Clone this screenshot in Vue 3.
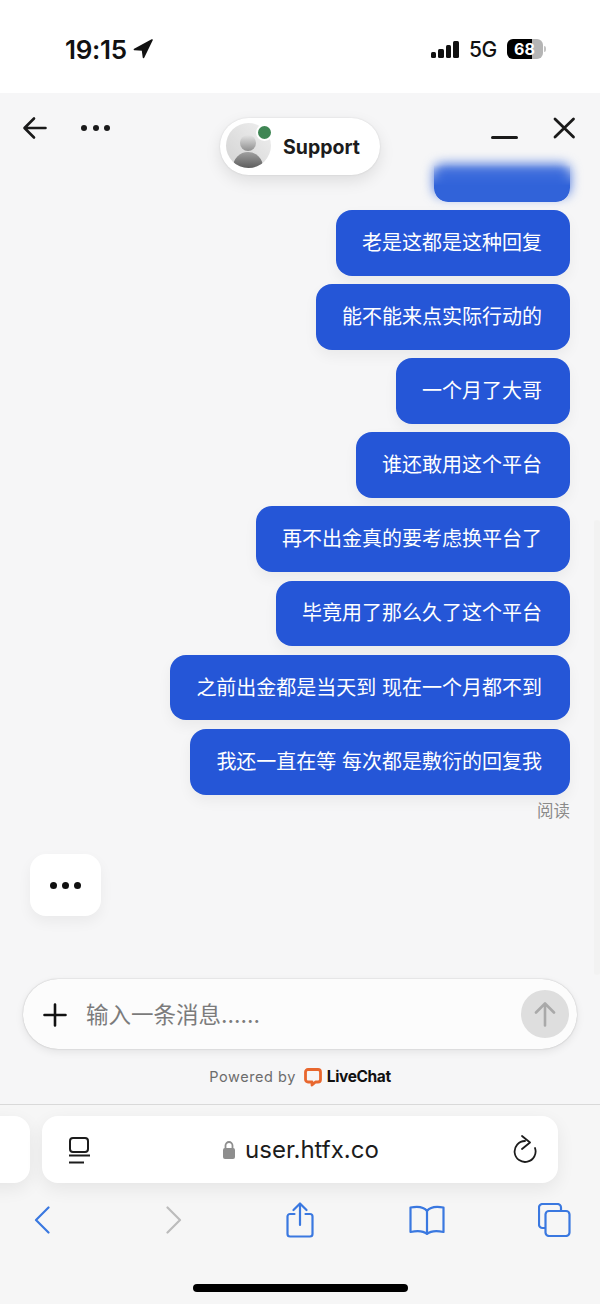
<template>
  <div class="screen">
    <div class="status">
      <div class="clock">
        <span>19:15</span>
        <svg width="20" height="20" viewBox="0 0 20 20"><path d="M19 1 1.500 10.500 9.500 11 10.500 18.500Z" fill="#111" stroke="#111" stroke-width="1.6" stroke-linejoin="round" /></svg>
      </div>
      <div class="status-right">
        <div class="signal"><i></i><i></i><i></i><i></i></div>
        <span class="net">5G</span>
        <div class="battery"><span>68</span></div>
        <div class="battery-tip"></div>
      </div>
    </div>

    <div class="chat">
      <div class="chat-head">
        <div class="head-left">
          <svg width="26" height="24" viewBox="0 0 26 24" fill="none" stroke="#1a1a1a" stroke-width="2.6" stroke-linecap="round" stroke-linejoin="round"><path d="M23.5 12H3M12 2.5 2.5 12l9.5 9.5" /></svg>
          <div class="more"><i></i><i></i><i></i></div>
        </div>
        <div class="head-right">
          <div class="minimize"></div>
          <svg width="24" height="24" viewBox="0 0 24 24" fill="none" stroke="#1a1a1a" stroke-width="2.8" stroke-linecap="round"><path d="M3 3 21.500 21M21.500 3 3 21" /></svg>
        </div>
        <div class="agent">
          <div class="avatar">
            <div class="avatar-head"></div>
            <div class="avatar-body"></div>
          </div>
          <div class="online"></div>
          <span>Support</span>
        </div>
      </div>

      <div class="messages">
        <div class="blurred"></div>
        <div v-for="msg in messages" :key="msg" class="bubble">{{ msg }}</div>
        <div class="read">阅读</div>
        <div class="typing"><i></i><i></i><i></i></div>
      </div>

      <div class="scrollbar"></div>

      <div class="composer">
        <svg class="plus" width="26" height="26" viewBox="0 0 26 26" stroke="#111" stroke-width="2.6" stroke-linecap="round"><path d="M13 2.5V23.5M2.5 13H23.5" /></svg>
        <span class="placeholder">输入一条消息......</span>
        <div class="send">
          <svg width="22" height="25" viewBox="0 0 22 25" fill="none" stroke="#a9a9a9" stroke-width="2.6" stroke-linecap="round" stroke-linejoin="round"><path d="M11 23.5V2M2 10.500 11 1.500 20 10.500" /></svg>
        </div>
      </div>

      <div class="powered">
        <span>Powered by</span>
        <svg width="18" height="19" viewBox="0 0 18 19" fill="none"><path d="M4 1.5H14A2.5 2.5 0 0 1 16.5 4V11.5A2.5 2.5 0 0 1 14 14H11.5L8 17V14H4A2.5 2.5 0 0 1 1.5 11.5V4A2.5 2.5 0 0 1 4 1.5Z" stroke="#e8672e" stroke-width="2.8" stroke-linejoin="round" /></svg>
        <b>LiveChat</b>
      </div>
    </div>

    <div class="browser">
      <div class="tabs">
        <div class="tab-prev"></div>
        <div class="address">
          <svg width="26" height="30" viewBox="0 0 26 30" fill="none" stroke="#1c1c1c" stroke-width="2"><rect x="4" y="3" width="18" height="14" rx="3" /><path d="M3 20.500H24M3 27.500H18" /></svg>
          <div class="url">
            <svg width="14" height="20" viewBox="0 0 14 20"><path d="M3.5 9V5.500a3.500 3.500 0 0 1 7 0V9" fill="none" stroke="#8e8e8e" stroke-width="1.8" /><rect x="1" y="8" width="12" height="11" rx="2" fill="#8e8e8e" /></svg>
            <span>user.htfx.co</span>
          </div>
          <svg width="24" height="30" viewBox="0 0 24 30" fill="none" stroke="#1c1c1c" stroke-width="1.8" stroke-linecap="round" stroke-linejoin="round"><path d="M12 6A10.500 10.500 0 1 0 22 13M9 1 17 7.500 9 14" /></svg>
        </div>
      </div>
      <div class="toolbar">
        <svg class="tool-back" width="16" height="28" viewBox="0 0 16 28" fill="none" stroke="#3a78e0" stroke-width="2.2" stroke-linecap="round" stroke-linejoin="round"><path d="M14.500 1.500 2 14 14.500 26.500" /></svg>
        <svg class="tool-forward" width="16" height="28" viewBox="0 0 16 28" fill="none" stroke="#bcbcbc" stroke-width="2.2" stroke-linecap="round" stroke-linejoin="round"><path d="M1.500 1.500 14 14 1.500 26.500" /></svg>
        <svg class="tool-share" width="28" height="36" viewBox="0 0 28 36" fill="none" stroke="#3a78e0" stroke-width="2.2" stroke-linecap="round" stroke-linejoin="round"><path d="M8.500 12H4A2.500 2.500 0 0 0 1.500 14.500V32A2.500 2.500 0 0 0 4 34.500H24A2.500 2.500 0 0 0 26.500 32V14.500A2.500 2.500 0 0 0 24 12H19.500M14 23V2M7.500 8 14 1.500 20.500 8" /></svg>
        <svg class="tool-book" width="36" height="30" viewBox="0 0 36 30" fill="none" stroke="#3a78e0" stroke-width="2.2" stroke-linecap="round" stroke-linejoin="round"><path d="M18 6C15 2 9 1 1.500 2.500V27C9 25.500 14.500 26 18 29 21.500 26 27 25.500 34.500 27V2.500C27 1 21 2 18 6ZM18 6V29" /></svg>
        <svg class="tool-tabs" width="33" height="34" viewBox="0 0 33 34" fill="none" stroke="#3a78e0" stroke-width="2.2" stroke-linejoin="round"><path d="M7 25H4.500A3.500 3.500 0 0 1 1 21.500V4.500A3.500 3.500 0 0 1 4.500 1H19.500A3.500 3.500 0 0 1 23 4.500V7.500" /><rect x="7.500" y="8" width="24" height="25" rx="3.500" /></svg>
      </div>
      <div class="home-bar"></div>
    </div>
  </div>
</template>

<script setup>
const messages = [
  '老是这都是这种回复',
  '能不能来点实际行动的',
  '一个月了大哥',
  '谁还敢用这个平台',
  '再不出金真的要考虑换平台了',
  '毕竟用了那么久了这个平台',
  '之前出金都是当天到 现在一个月都不到',
  '我还一直在等 每次都是敷衍的回复我'
]
</script>

<style>
html, body {
  margin: 0;
  background: #fff;
}
</style>

<style scoped>
.screen {
  width: 600px;
  height: 1304px;
  overflow: hidden;
  display: flex;
  flex-direction: column;
  font-family: Inter, "Noto Sans CJK SC", sans-serif;
  background: #fff;
}

.status {
  height: 93px;
  flex-shrink: 0;
  box-sizing: border-box;
  padding: 33px 54px 0 65px;
  display: flex;
  justify-content: space-between;
  align-items: flex-start;
}

.clock {
  display: flex;
  align-items: center;
  gap: 6px;
  height: 32px;
  font-size: 26px;
  font-weight: 600;
  letter-spacing: -0.3px;
  color: #111;
}

.status-right {
  display: flex;
  align-items: center;
  height: 32px;
}

.signal {
  display: flex;
  align-items: flex-end;
  gap: 2px;
  height: 17px;
  margin-right: 10px;
}

.signal i {
  width: 5.5px;
  background: #111;
  border-radius: 1.5px;
}

.signal i:nth-child(1) { height: 6px; }
.signal i:nth-child(2) { height: 9px; }
.signal i:nth-child(3) { height: 13px; }
.signal i:nth-child(4) { height: 17px; }

.net {
  font-size: 21px;
  font-weight: 500;
  color: #111;
  margin-right: 10px;
  letter-spacing: -0.3px;
}

.battery {
  width: 36px;
  height: 20px;
  box-sizing: border-box;
  padding-left: 7px;
  border-radius: 6px;
  background: linear-gradient(90deg, #000 0 25px, #b5b5b5 25px);
}

.battery span {
  display: block;
  font-size: 16px;
  line-height: 20px;
  font-weight: 700;
  color: #fff;
}

.battery-tip {
  width: 2px;
  height: 6px;
  margin-left: 1px;
  border-radius: 0 2px 2px 0;
  background: #c4c4c4;
}

.chat {
  position: relative;
  flex: 1;
  min-height: 0;
  display: flex;
  flex-direction: column;
  background: #f6f6f7;
  border-bottom: 1px solid #d9d9d9;
}

.chat-head {
  position: relative;
  height: 72px;
  flex-shrink: 0;
  box-sizing: border-box;
  padding: 23px 24px 0 22px;
  display: flex;
  justify-content: space-between;
  align-items: flex-start;
}

.head-left {
  display: flex;
  align-items: center;
  gap: 33px;
}

.more {
  display: flex;
  gap: 5.5px;
}

.more i {
  width: 6px;
  height: 6px;
  border-radius: 50%;
  background: #1a1a1a;
}

.head-right {
  display: flex;
  align-items: flex-start;
  gap: 34px;
}

.minimize {
  width: 27px;
  height: 3px;
  margin-top: 20px;
  border-radius: 2px;
  background: #1a1a1a;
}

.agent {
  position: absolute;
  left: 220px;
  top: 25px;
  width: 160px;
  height: 57px;
  box-sizing: border-box;
  padding-left: 63px;
  display: flex;
  align-items: center;
  border-radius: 29px;
  background: #fff;
  box-shadow: 0 6px 16px rgba(0, 0, 0, 0.1), 0 0 2px rgba(0, 0, 0, 0.12);
  z-index: 2;
}

.agent span {
  font-size: 19.5px;
  font-weight: 700;
  color: #1c1c1c;
}

.avatar {
  position: absolute;
  left: 6px;
  top: 5px;
  width: 45px;
  height: 45px;
  overflow: hidden;
  border-radius: 50%;
  background: linear-gradient(45deg, #d2d2d2, #f0f0f0);
}

.avatar-head {
  position: absolute;
  left: 14px;
  top: 12px;
  width: 16px;
  height: 16px;
  border-radius: 50%;
  background: linear-gradient(#e4e4e4, #8f8f8f);
}

.avatar-body {
  position: absolute;
  left: 7px;
  top: 29px;
  width: 30px;
  height: 30px;
  border-radius: 50%;
  background: linear-gradient(#a0a0a0, #555 60%);
}

.online {
  position: absolute;
  left: 36px;
  top: 6px;
  width: 13px;
  height: 13px;
  border: 2px solid #fff;
  border-radius: 50%;
  background: #3f8654;
}

.messages {
  flex: 1;
  min-height: 0;
  padding-right: 30px;
  display: flex;
  flex-direction: column;
  align-items: flex-end;
  gap: 8.45px;
}

.bubble {
  height: 65.7px;
  flex-shrink: 0;
  box-sizing: border-box;
  padding: 0 28px 3px 26px;
  display: flex;
  align-items: center;
  border-radius: 16px;
  background: #2556d7;
  box-shadow: 0 6px 14px rgba(0, 0, 0, 0.05);
  font-size: 20px;
  color: #fff;
  white-space: pre;
}

/* first message fades out under the header */
.blurred {
  position: relative;
  width: 136px;
  height: 36.55px;
  flex-shrink: 0;
}

.blurred::before {
  content: "";
  position: absolute;
  inset: -1px 0 6px 0;
  border-radius: 8px;
  background: #4472de;
  filter: blur(6px);
}

.blurred::after {
  content: "";
  position: absolute;
  inset: 0;
  border-radius: 0 0 14px 14px;
  background: #3163d9;
  -webkit-mask-image: linear-gradient(transparent, #000 55%);
  mask-image: linear-gradient(transparent, #000 55%);
}

.read {
  margin-top: -3px;
  font-size: 16.5px;
  line-height: 22px;
  color: #8a8a8a;
}

.typing {
  align-self: flex-start;
  width: 71px;
  height: 62px;
  flex-shrink: 0;
  margin: 24px 0 0 30px;
  display: flex;
  align-items: center;
  justify-content: center;
  gap: 5px;
  border-radius: 16px;
  background: #fff;
  box-shadow: 0 6px 14px rgba(0, 0, 0, 0.05);
}

.typing i {
  width: 7px;
  height: 7px;
  border-radius: 50%;
  background: #111;
}

.scrollbar {
  position: absolute;
  right: 0;
  top: 427px;
  width: 6px;
  height: 455px;
  background: #f2f2f2;
  border-radius: 3px;
}

.composer {
  flex-shrink: 0;
  height: 70px;
  margin: 0 23px;
  box-sizing: border-box;
  padding: 0 8px 0 19px;
  display: flex;
  align-items: center;
  border-radius: 35px;
  background: #fcfcfc;
  box-shadow: 0 3px 8px rgba(0, 0, 0, 0.08), 0 0 1.5px rgba(0, 0, 0, 0.25);
}

.plus {
  margin-top: 1px;
}

.placeholder {
  margin-left: 18px;
  padding-bottom: 2px;
  flex: 1;
  font-size: 22.5px;
  color: #7b7b7b;
}

.send {
  width: 48px;
  height: 48px;
  display: flex;
  align-items: center;
  justify-content: center;
  border-radius: 50%;
  background: #dedede;
}

.powered {
  flex-shrink: 0;
  height: 55px;
  display: flex;
  align-items: center;
  justify-content: center;
  font-size: 14.5px;
  letter-spacing: 0.55px;
  color: #6c6c6c;
}

.powered svg {
  margin: 2px 5px 0 8px;
}

.powered b {
  font-size: 15.5px;
  letter-spacing: -0.4px;
  color: #111;
}

.browser {
  height: 199px;
  flex-shrink: 0;
  position: relative;
  background: #f6f6f6;
}

.tabs {
  display: flex;
  gap: 12px;
  margin: 11px 0 0 -40px;
  height: 67px;
}

.tab-prev {
  width: 70px;
  height: 67px;
  flex-shrink: 0;
  border-radius: 16px;
  background: #fff;
  box-shadow: 0 6px 18px rgba(0, 0, 0, 0.07);
}

.address {
  width: 516px;
  height: 67px;
  flex-shrink: 0;
  box-sizing: border-box;
  padding: 0 21px 0 24px;
  display: flex;
  align-items: center;
  justify-content: space-between;
  border-radius: 16px;
  background: #fff;
  box-shadow: 0 6px 18px rgba(0, 0, 0, 0.07);
}

.url {
  display: flex;
  align-items: center;
  gap: 9px;
  margin-right: 4px;
  font-size: 24px;
  color: #1c1c1c;
}

.toolbar {
  display: flex;
  align-items: center;
  height: 38px;
  margin-top: 18px;
  padding-left: 34px;
}

.tool-forward { margin-left: 116px; }
.tool-share { margin-left: 104px; }
.tool-book { margin-left: 95px; }
.tool-tabs { margin-left: 93px; }

.home-bar {
  position: absolute;
  left: 193px;
  bottom: 12px;
  width: 215px;
  height: 8px;
  border-radius: 4px;
  background: #000;
}
</style>
